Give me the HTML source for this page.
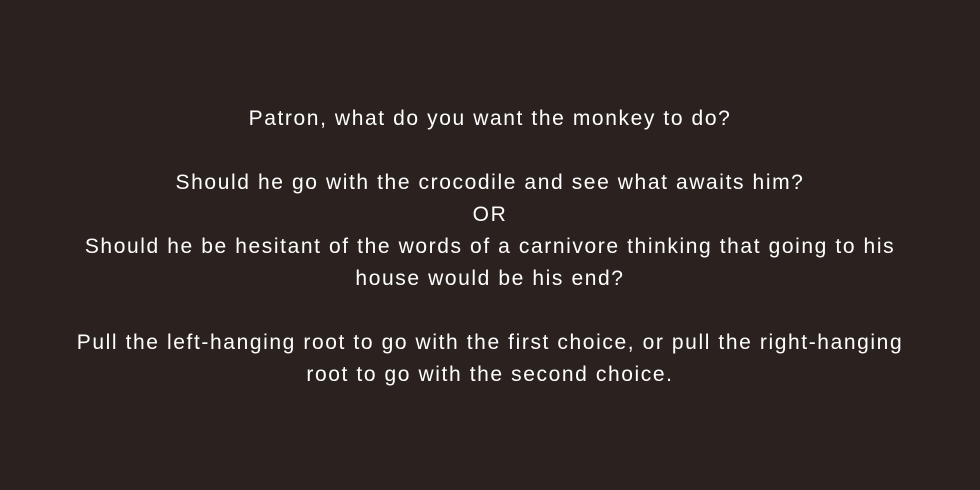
<!DOCTYPE html>
<html><head><meta charset="utf-8"><style>
html,body{margin:0;padding:0;}
body{width:980px;height:490px;background:#2b2220;overflow:hidden;}
.t{position:absolute;top:103px;left:0;width:980px;text-align:center;color:#fff;font-family:"Liberation Sans",sans-serif;font-size:21px;line-height:32px;letter-spacing:1.6px;}
</style></head><body>
<div class="t">Patron, what do you want the monkey to do?<br><br>Should he go with the crocodile and see what awaits him?<br>OR<br>Should he be hesitant of the words of a carnivore thinking that going to his<br>house would be his end?<br><br>Pull the left-hanging root to go with the first choice, or pull the right-hanging<br>root to go with the second choice.</div>
</body></html>
